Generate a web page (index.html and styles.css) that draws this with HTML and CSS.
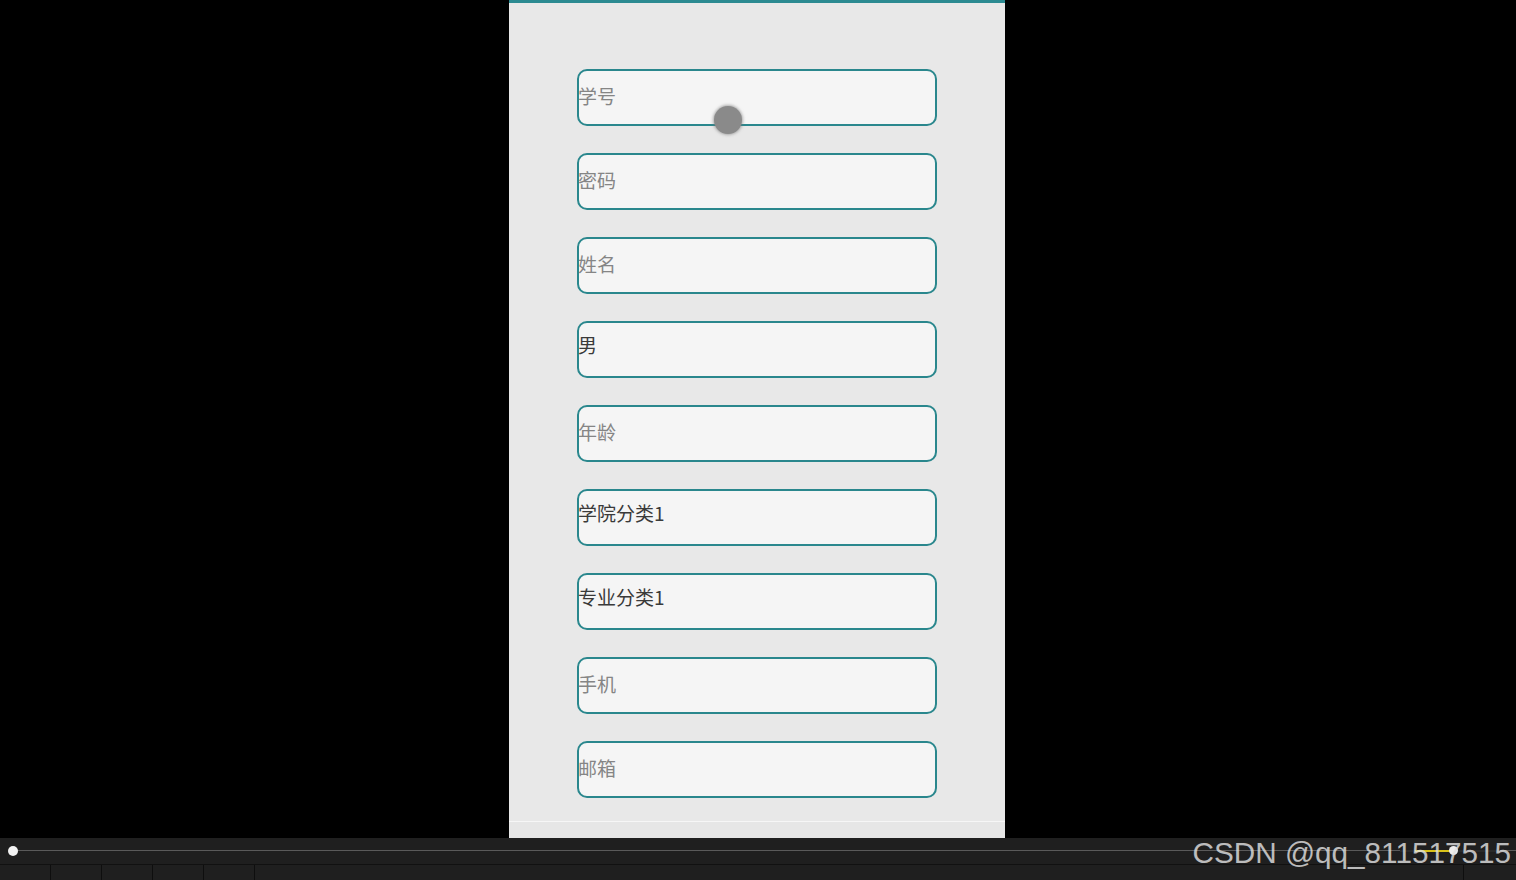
FILE: index.html
```html
<!DOCTYPE html>
<html>
<head>
  <meta charset="utf-8">
  <title>注册</title>
  <link rel="stylesheet" href="styles.css">
</head>
<body>
<div class="stage">
  <div class="phone">
    <form class="form">
      <input class="field" type="text" placeholder="学号">
      <input class="field" type="password" placeholder="密码">
      <input class="field" type="text" placeholder="姓名">
      <div class="field select"><span>男</span></div>
      <input class="field" type="text" placeholder="年龄">
      <div class="field select"><span>学院分类1</span></div>
      <div class="field select"><span>专业分类1</span></div>
      <input class="field" type="text" placeholder="手机">
      <input class="field" type="text" placeholder="邮箱">
    </form>
    <div class="nav-strip"></div>
    <!-- touch indicator -->
    <div class="touch"></div>
  </div>
</div>

<div class="player">
  <div class="track-row">
    <div class="track"></div>
    <div class="knob"></div>
    <div class="volume"><span class="volume-fill"></span><span class="volume-knob"></span></div>
  </div>
  <div class="buttons">
    <span></span><span></span><span></span><span></span><span></span>
    <span class="grow"></span>
    <span class="end"></span>
  </div>
</div>

<div class="watermark">CSDN @qq_811517515</div>
</body>
</html>
```

FILE: styles.css
```css
html, body {
  margin: 0;
  height: 100%;
}

body {
  background: #000;
  overflow: hidden;
  font-family: "Noto Sans CJK SC", "Liberation Sans", sans-serif;
  position: relative;
}

.stage {
  height: 838px;
  display: flex;
  justify-content: center;
  padding-right: 2px;
}

.phone {
  position: relative;
  width: 496px;
  height: 835px;
  background: #e8e8e8;
  border-top: 3px solid #2b8a91;
  display: flex;
  flex-direction: column;
}

.form {
  display: flex;
  flex-direction: column;
  align-items: center;
  gap: 27px;
  padding-top: 66px;
}

.field {
  box-sizing: border-box;
  width: 360px;
  height: 57px;
  flex-shrink: 0;
  margin: 0;
  padding: 0 0 4px 0;
  text-indent: -1px;
  border: 2px solid #2a878d;
  border-radius: 10px;
  background: #f5f5f5;
  font-family: "Noto Sans CJK SC", sans-serif;
  font-size: 19px;
  color: #333;
  outline: none;
}

.field::placeholder {
  color: #858585;
}

.select {
  display: flex;
  align-items: center;
  padding-bottom: 10px;
  color: #3a3a3a;
}

.nav-strip {
  margin-top: auto;
  height: 16px;
  border-top: 1px solid #f6f6f6;
  background: #e6e6e6;
}

.touch {
  position: absolute;
  left: 205px;
  top: 103px;
  width: 28px;
  height: 28px;
  border-radius: 50%;
  background: #8a8a8a;
  box-shadow: 0 0 3px 1px rgba(120, 120, 120, 0.6);
}

/* video player controls */
.player {
  height: 42px;
  background: #1f1f1f;
}

.track-row {
  position: relative;
  height: 26px;
  border-bottom: 1px solid #111;
}

.track {
  position: absolute;
  left: 13px;
  right: 0;
  top: 12px;
  height: 1px;
  background: #5a5a5a;
}

.knob {
  position: absolute;
  left: 8px;
  top: 8px;
  width: 10px;
  height: 10px;
  border-radius: 50%;
  background: #f2f2f2;
}

.volume {
  position: absolute;
  left: 1400px;
  top: 12px;
  width: 100px;
  height: 2px;
  background: #2a2a2a;
}

.volume-fill {
  position: absolute;
  left: 15px;
  width: 38px;
  height: 2px;
  background: #d8c21a;
}

.volume-knob {
  position: absolute;
  left: 49px;
  top: -4px;
  width: 9px;
  height: 9px;
  border-radius: 50%;
  background: #eee;
}

.buttons {
  display: flex;
  height: 15px;
}

.buttons span {
  width: 50px;
  border-right: 1px solid #0e0e0e;
}

.buttons .grow {
  flex: 1;
  width: auto;
}

.buttons .end {
  width: 52px;
  border-right: none;
}

.watermark {
  position: absolute;
  right: 5px;
  top: 836px;
  font-family: "Liberation Sans", sans-serif;
  font-size: 29.7px;
  color: rgba(225, 225, 225, 0.82);
  white-space: nowrap;
}
```
